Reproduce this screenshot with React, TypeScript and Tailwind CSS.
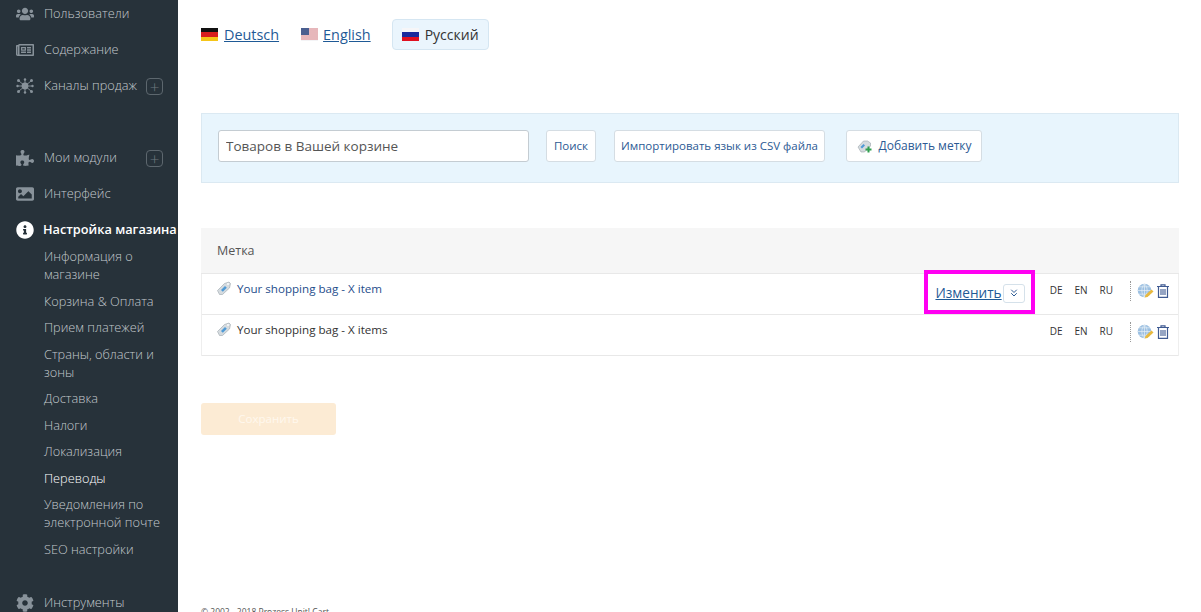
import { FaCog, FaImage, FaInfoCircle, FaPuzzlePiece, FaRegNewspaper, FaUsers } from 'react-icons/fa'
import { FiChevronsDown } from 'react-icons/fi'

const SUB_ITEMS = [
  'Информация о магазине',
  'Корзина & Оплата',
  'Прием платежей',
  'Страны, области и зоны',
  'Доставка',
  'Налоги',
  'Локализация',
  'Переводы',
  'Уведомления по электронной почте',
  'SEO настройки',
]

function NetworkIcon() {
  return (
    <svg viewBox="0 0 18 16" className="w-[18px] h-4" fill="#88929a" stroke="#88929a">
      <circle cx="9" cy="8" r="3.4" stroke="none" />
      <path d="M9 8 3 3M9 8l6-5M9 8 2 8M9 8h7M9 8l-6 5M9 8l6 5M9 8V1M9 8v7" strokeWidth="0.9" fill="none" />
      <circle cx="2.5" cy="2.5" r="1.5" stroke="none" />
      <circle cx="15.5" cy="2.5" r="1.5" stroke="none" />
      <circle cx="1.5" cy="8" r="1.2" stroke="none" />
      <circle cx="16.5" cy="8" r="1.2" stroke="none" />
      <circle cx="2.5" cy="13.5" r="1.5" stroke="none" />
      <circle cx="15.5" cy="13.5" r="1.5" stroke="none" />
      <circle cx="9" cy="1.5" r="1.2" stroke="none" />
      <circle cx="9" cy="14.5" r="1.2" stroke="none" />
    </svg>
  )
}

function PlusBox() {
  return (
    <span className="ml-auto mr-[15px] w-[17px] h-[17px] border border-[#5d676e] rounded-[4px] flex items-center justify-center text-[#6d777e] text-[17px] font-light leading-none">
      +
    </span>
  )
}

function NavItem({ icon, label, plus }: { icon: React.ReactNode; label: string; plus?: boolean }) {
  return (
    <div className="h-9 flex items-center text-[12.75px] font-light text-[#c3c9cd]">
      <span className="w-11 pl-4 shrink-0 flex items-center text-[#88929a] text-[18px]">{icon}</span>
      <span>{label}</span>
      {plus && <PlusBox />}
    </div>
  )
}

function Flag({ colors }: { colors: string[] }) {
  return (
    <span className="w-[17px] h-[13px] flex flex-col shrink-0">
      {colors.map((c, i) => (
        <span key={i} className="flex-1" style={{ background: c }} />
      ))}
    </span>
  )
}

function UsFlag() {
  return (
    <svg viewBox="0 0 17 13" className="w-[17px] h-[13px] shrink-0">
      <rect width="17" height="13" fill="#f4f4f6" />
      <path d="M0 1h17M0 3h17M0 5h17M0 7h17M0 9h17M0 11h17" stroke="#d97a80" strokeWidth="1" />
      <rect width="8" height="7" fill="#4a5f90" />
    </svg>
  )
}

function TagIcon() {
  return (
    <svg viewBox="0 0 14 14" className="w-[14px] h-[14px] shrink-0">
      <path d="M0.5 9.5 7.5 2.5l4.5-1.5 1.5 1.5-1 4.5-7 6.5H2.5z" fill="#d5dbdf" stroke="#9aa5ab" strokeWidth="0.6" />
      <path d="m4 9 4-4 1.8 1.8-4 4z" fill="#4f9ad6" />
      <circle cx="11" cy="3" r="0.9" fill="#fff" />
    </svg>
  )
}

function GlobeIcon() {
  return (
    <svg viewBox="0 0 17 15" className="w-[17px] h-[15px] shrink-0">
      <circle cx="7.5" cy="7.5" r="6.8" fill="#9cc0e2" />
      <path d="M.7 7.5h13.6M7.5.7v13.6M2 3.8h11M2 11.2h11M7.5.7C4 4 4 11 7.5 14.3M7.5.7C11 4 11 11 7.5 14.3" stroke="#e6eff7" strokeWidth="0.7" fill="none" />
      <path d="m8.5 12 6-5.5 2 2-6 5.5-2.800.5z" fill="#e8b93f" />
    </svg>
  )
}

function TrashIcon() {
  return (
    <svg viewBox="0 0 12 14" className="w-3 h-[14px] shrink-0" fill="none" stroke="#3f5a92" strokeWidth="1.2">
      <path d="M0 2.5h12M4 2.5V.8h4v1.7M1.500 2.500v10.800h9V2.500" />
      <path d="M4 5v6M6 5v6M8 5v6" strokeWidth="1.1" />
    </svg>
  )
}

function AddTagIcon() {
  return (
    <svg viewBox="0 0 16 15" className="w-4 h-[15px] shrink-0">
      <path d="M1 8 6.500 2h4l3 2v3l-6 6H4z" fill="#d5dbdf" stroke="#9aa5ab" strokeWidth="0.6" />
      <path d="m3.500 8 3-3 1.500 1.500-3 3z" fill="#4f9ad6" />
      <path d="M11.500 7.500v6M8.500 10.500h6" stroke="#2f9e4f" strokeWidth="2" />
    </svg>
  )
}

function LangCells() {
  return (
    <div className="flex items-center text-[10px] text-[#333] gap-[12px] ml-auto">
      <span>DE</span>
      <span>EN</span>
      <span>RU</span>
    </div>
  )
}

function RowTools() {
  return (
    <div className="flex items-center ml-[17px] mr-[9px]">
      <span className="h-5 border-l border-dotted border-[#999]" />
      <span className="ml-[6px]"><GlobeIcon /></span>
      <span className="ml-[3px]"><TrashIcon /></span>
    </div>
  )
}

export default function App() {
  return (
    <div className="w-[1201px] h-[612px] overflow-hidden flex bg-white font-['Open_Sans',sans-serif]">
      {/* Sidebar */}
      <aside className="w-[178px] h-full shrink-0 bg-[#27323a] overflow-hidden">
        <div className="-mt-1">
          <NavItem icon={<FaUsers />} label="Пользователи" />
          <NavItem icon={<FaRegNewspaper />} label="Содержание" />
          <NavItem icon={<NetworkIcon />} label="Каналы продаж" plus />
          <div className="h-9" />
          <NavItem icon={<FaPuzzlePiece />} label="Мои модули" plus />
          <NavItem icon={<FaImage />} label="Интерфейс" />
          <div className="h-9 flex items-center text-[12.75px] font-semibold text-white whitespace-nowrap">
            <span className="w-[43px] pl-4 shrink-0 text-[18px]"><FaInfoCircle /></span>
            <span>Настройка магазина</span>
          </div>
          <ul className="pl-11 pr-3 -mt-px text-[12.75px] leading-[18px] font-light text-[#c3c9cd]">
            {SUB_ITEMS.map(item => (
              <li key={item} className={`mb-[8.56px] ${item === 'Переводы' ? 'text-white' : ''}`}>
                {item}
              </li>
            ))}
          </ul>
          <div className="mt-[27px]">
            <NavItem icon={<FaCog />} label="Инструменты" />
          </div>
        </div>
      </aside>

      {/* Main */}
      <main className="flex-1 pl-[23px] pr-[22px] relative">
        <div className="flex items-center h-[31px] mt-[19px] text-[14.4px]">
          <a className="flex items-center gap-[6px] text-[#1f5a96] underline">
            <Flag colors={['#111', '#d81e1e', '#f5c518']} />
            Deutsch
          </a>
          <a className="flex items-center gap-[5px] text-[#1f5a96] underline ml-[22px]">
            <UsFlag />
            English
          </a>
          <span className="flex items-center gap-[6px] h-[31px] px-[9px] ml-[21px] bg-[#eaf5fd] border border-[#d5e6f2] rounded-[4px] text-[#333] text-[14px]">
            <Flag colors={['#f6f6f8', '#1a2a9c', '#e01020']} />
            Русский
          </span>
        </div>

        <div className="mt-[63px] h-[70px] bg-[#e8f5fd] border border-[#dbe9f2] flex items-center pl-4 pb-1">
          <input
            readOnly
            value="Товаров в Вашей корзине"
            className="w-[311px] h-8 px-[7px] bg-white border border-[#c4ccd2] rounded-[3px] text-[13.5px] text-[#555] outline-none"
          />
          <button className="ml-[17px] w-[50px] h-8 bg-white border border-[#d5dde3] rounded-[3px] text-[11.5px] text-[#2c5a94]">Поиск</button>
          <button className="ml-[18px] w-[211px] h-8 bg-white border border-[#d5dde3] rounded-[3px] text-[11.5px] text-[#2c5a94] whitespace-nowrap">Импортировать язык из CSV файла</button>
          <button className="ml-[21px] w-[136px] h-8 bg-white border border-[#d5dde3] rounded-[3px] text-[12px] text-[#2c5a94] flex items-center justify-center gap-[6px] whitespace-nowrap">
            <AddTagIcon />
            Добавить метку
          </button>
        </div>

        <div className="mt-[45px] h-[46px] bg-[#f6f6f6] border-b border-[#e8e8e8] flex items-center pl-4 pt-[2px] text-[12.5px] text-[#555]">Метка</div>
        <div className="border-x border-[#eeeeee]">
          <div className="h-[41px] border-b border-[#e8e8e8] flex pl-[15px] items-center">
            <div className="flex items-center gap-[6px] -mt-[11px] text-[11.6px] text-[#1f4e8c]">
              <TagIcon />
              Your shopping bag - X item
            </div>
            <div className="relative flex items-center ml-auto mr-[25px] -mt-[1px]">
              <a className="text-[13.6px] text-[#1f5a96] underline">Изменить</a>
              <span className="ml-[1px] w-[22px] h-[19px] border border-[#d5e1ea] rounded-[3px] flex items-center justify-center text-[#2c5a94] text-[12px]"><FiChevronsDown /></span>
              <span className="absolute left-[-11px] top-[-13px] w-[111px] h-[44px] border-[4px] border-[#ff00f2]" />
            </div>
            <div className="flex items-center -mt-[7px]">
              <LangCells />
              <RowTools />
            </div>
          </div>
          <div className="h-[41px] border-b border-[#e8e8e8] flex pl-[15px] items-center">
            <div className="flex items-center gap-[6px] -mt-[11px] text-[11.6px] text-[#333]">
              <TagIcon />
              Your shopping bag - X items
            </div>
            <div className="flex items-center ml-auto -mt-[7px]">
              <LangCells />
              <RowTools />
            </div>
          </div>
        </div>

        <button className="mt-[47px] w-[135px] h-[32px] bg-[#fcebd4] rounded-[3px] text-[11.5px] text-[#fff8ee]">Сохранить</button>

        <div className="absolute left-[23px] top-[606px] text-[8.500px] leading-3 text-[#555] whitespace-nowrap">© 2002 - 2018 Prozess Unit! Cart</div>
      </main>
    </div>
  )
}
